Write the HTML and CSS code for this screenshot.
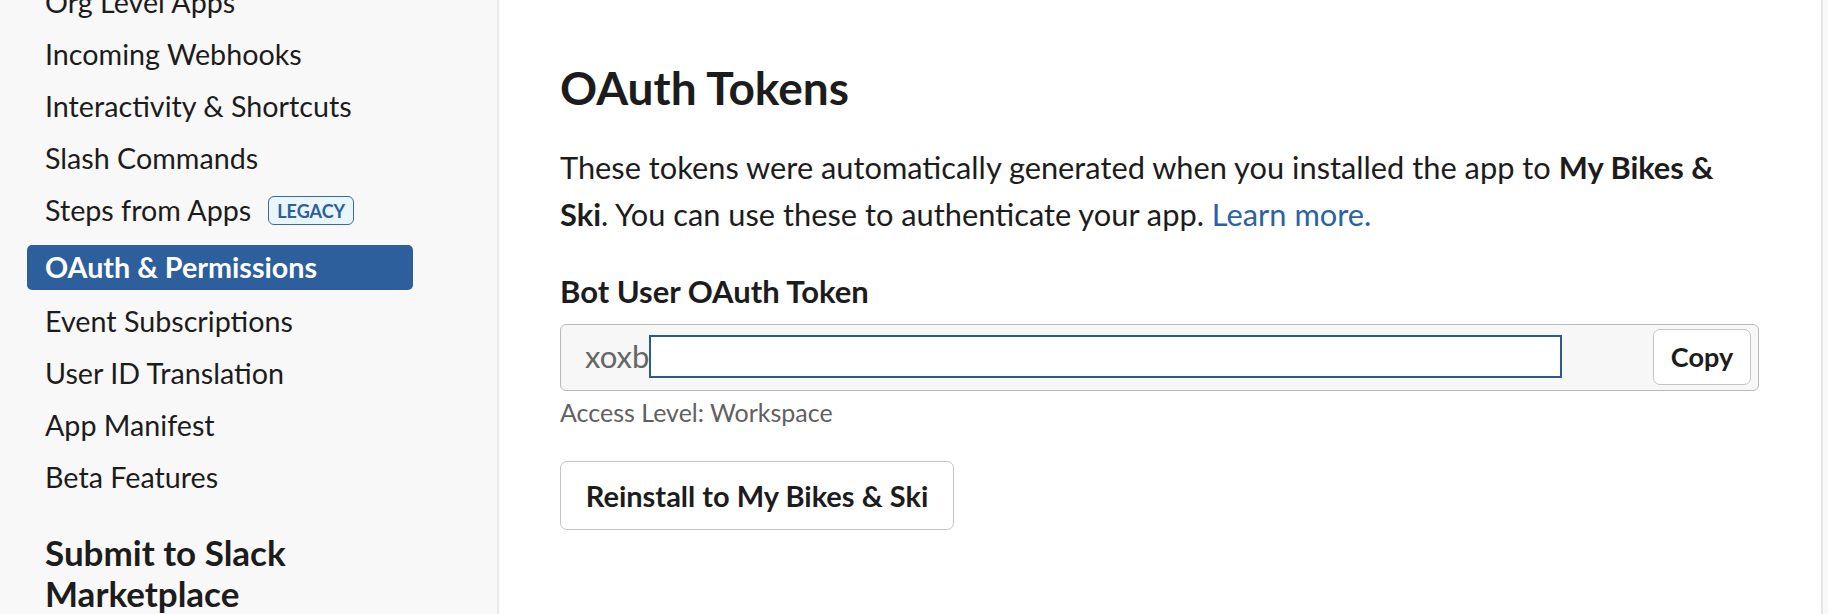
FILE: index.html
```html
<!DOCTYPE html>
<html lang="en">
<head>
<meta charset="utf-8">
<title>OAuth &amp; Permissions</title>
<link rel="stylesheet" href="styles.css">
</head>
<body>
<div class="app">
  <aside class="sidebar">
    <nav class="nav">
      <a class="nav-item" href="#">Org Level Apps</a>
      <a class="nav-item" href="#">Incoming Webhooks</a>
      <a class="nav-item" href="#">Interactivity &amp; Shortcuts</a>
      <a class="nav-item" href="#">Slash Commands</a>
      <a class="nav-item" href="#">Steps from Apps <span class="badge">LEGACY</span></a>
      <a class="nav-item active" href="#">OAuth &amp; Permissions</a>
      <a class="nav-item" href="#">Event Subscriptions</a>
      <a class="nav-item" href="#">User ID Translation</a>
      <a class="nav-item" href="#">App Manifest</a>
      <a class="nav-item" href="#">Beta Features</a>
    </nav>
    <h3 class="side-heading">Submit to Slack Marketplace</h3>
  </aside>
  <main class="main">
    <h2 class="title">OAuth Tokens</h2>
    <p class="lead">These tokens were automatically generated when you installed the app to <strong>My Bikes &amp; Ski</strong>. You can use these to authenticate your app. <a class="link" href="#">Learn more.</a></p>
    <h4 class="label">Bot User OAuth Token</h4>
    <div class="token-box">
      <span class="prefix">xoxb</span>
      <input class="token-input" type="text" value="">
      <button class="btn btn-copy" type="button">Copy</button>
    </div>
    <p class="hint">Access Level: Workspace</p>
    <button class="btn btn-reinstall" type="button">Reinstall to My Bikes &amp; Ski</button>
  </main>
  <div class="rail"></div>
</div>
</body>
</html>
```
FILE: styles.css
```css
* { box-sizing: border-box; }
html, body { margin: 0; padding: 0; }
body {
  font-family: Lato, "Open Sans", sans-serif;
  color: #1d1c1d;
  background: #ffffff;
  overflow: hidden;
}
.app {
  display: flex;
  width: 1828px;
  height: 614px;
  overflow: hidden;
}
.sidebar {
  width: 499px;
  flex: none;
  background: #f8f8f8;
  border-right: 2px solid #e8e8e8;
  overflow: hidden;
}
.nav {
  display: flex;
  flex-direction: column;
  gap: 7px;
  width: 386px;
  margin: -20px 0 0 27px;
}
.nav-item {
  display: flex;
  align-items: center;
  height: 45px;
  padding: 0 18px;
  font-size: 28.7px;
  line-height: 45px;
  color: #1d1c1d;
  text-decoration: none;
  border-radius: 5px;
  white-space: nowrap;
}
.nav-item.active {
  background: #2c5f9c;
  color: #ffffff;
  font-weight: 700;
  margin: 5px 0 2px;
}
.badge {
  display: inline-flex;
  align-items: center;
  height: 29px;
  margin-left: 17px;
  padding: 0 8px;
  font-size: 18px;
  line-height: 1;
  font-weight: 700;
  color: #2c5f9c;
  background: #e8f5fb;
  border: 1.5px solid #3a6aa6;
  border-radius: 6px;
}
.side-heading {
  margin: 32px 0 0 45px;
  max-width: 380px;
  font-size: 35px;
  line-height: 41px;
  font-weight: 700;
}
.main {
  flex: 1;
  padding: 0 62px 0 61px;
  background: #ffffff;
}
.title {
  margin: 62px 0 0;
  font-size: 46px;
  line-height: 52px;
  font-weight: 700;
}
.lead {
  margin: 30px 0 0;
  font-size: 30.8px;
  line-height: 47px;
  max-width: 1198px;
}
.lead strong { font-weight: 700; }
.link { color: #2a62a6; text-decoration: none; }
.label {
  margin: 35px 0 0;
  font-size: 31px;
  line-height: 36px;
  font-weight: 700;
}
.token-box {
  display: flex;
  align-items: center;
  width: 1199px;
  height: 67px;
  margin-top: 15px;
  padding: 0 7px 2px 24px;
  background: #f7f7f7;
  border: 1.5px solid #b9b9b9;
  border-radius: 6px;
}
.prefix {
  font-size: 31px;
  color: #666666;
  line-height: 43px;
}
.token-input {
  width: 913px;
  height: 43px;
  margin: 0;
  border: 2px solid #2a5a8e;
  background: #ffffff;
  outline: none;
  font: inherit;
}
.btn {
  font-family: Lato, "Open Sans", sans-serif;
  font-weight: 700;
  color: #1d1c1d;
  background: #ffffff;
  border: 1.5px solid #c4c4c4;
  border-radius: 7px;
  cursor: pointer;
}
.btn-copy {
  margin-left: auto;
  width: 98px;
  height: 56px;
  font-size: 27px;
  padding: 0;
}
.hint {
  margin: 7px 0 0;
  font-size: 25px;
  line-height: 28px;
  color: #616061;
}
.btn-reinstall {
  margin-top: 35px;
  width: 394px;
  height: 69px;
  font-size: 29px;
  padding: 0;
}
.rail {
  width: 8px;
  flex: none;
  background: #f8f8f8;
  border-left: 2px solid #e6e6e6;
}
```
